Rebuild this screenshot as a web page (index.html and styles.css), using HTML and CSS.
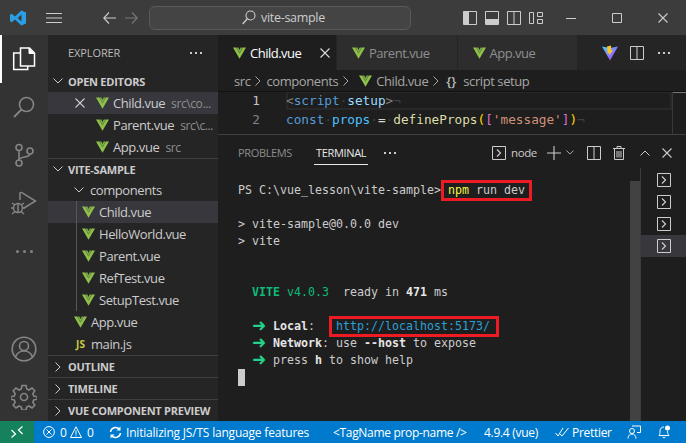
FILE: index.html
```html
<!DOCTYPE html>
<html lang="en">
<head>
<meta charset="utf-8">
<title>vite-sample</title>
<link rel="stylesheet" href="styles.css">
</head>
<body>
<svg class="defs" width="0" height="0">
  <symbol id="vue" viewBox="0 0 13 12">
    <path d="M0 .5h3.200L6.500 6.600 9.800.5H13L6.500 11.800z" fill="#8dc149"/>
    <path d="M3.400.5h2L6.500 3l1.100-2.500h2L6.500 6.200z" fill="#7fa94a"/>
  </symbol>
  <symbol id="termbox" viewBox="0 0 14 14">
    <path d="M.5.5h13v13H.5z" fill="none" stroke="currentColor"/>
    <path d="M5 3.500 8.500 7 5 10.500" fill="none" stroke="currentColor" stroke-width="1.200"/>
  </symbol>
  <symbol id="chev-d" viewBox="0 0 10 6"><path d="M.5.5 5 5 9.500.5" fill="none" stroke="currentColor"/></symbol>
  <symbol id="chev-r" viewBox="0 0 6 10"><path d="M.5.5 5 5 .5 9.500" fill="none" stroke="currentColor"/></symbol>
  <symbol id="split" viewBox="0 0 14 14"><path d="M.5.5h13v13H.5zM7 .5v13" fill="none" stroke="currentColor"/></symbol>
  <symbol id="close" viewBox="0 0 10 10"><path d="M.5.5l9 9M9.500.5l-9 9" fill="none" stroke="currentColor" stroke-width="1.100"/></symbol>
</svg>

<div class="app">
  <header class="titlebar">
    <svg class="logo" width="16" height="16" viewBox="0 0 16 16">
      <path d="M11.400.4 16 2.600v10.800l-4.600 2.200L5 9.600 1.700 12.200 0 11.200V4.800l1.700-1L5 6.400zM11.500 4.600 7.600 8l3.900 3.400z" fill="#2a9fe6"/>
    </svg>
    <svg class="menu" width="16" height="10" viewBox="0 0 16 10"><path d="M0 .5h16M0 5h16M0 9.500h16" stroke="#ccc"/></svg>
    <svg class="nav-back" width="13" height="12" viewBox="0 0 13 12"><path d="M6 .5.800 6 6 11.500M1 6h12" fill="none" stroke="#ccc" stroke-width="1.100"/></svg>
    <svg class="nav-fwd" width="13" height="12" viewBox="0 0 13 12"><path d="M7 .5 12.200 6 7 11.500M12 6H0" fill="none" stroke="#777" stroke-width="1.100"/></svg>
    <div class="command">
      <svg width="14" height="15" viewBox="0 0 14 15"><circle cx="8.500" cy="5.500" r="4.500" fill="none" stroke="#ccc" stroke-width="1.100"/><path d="M5.300 8.800.7 14" stroke="#ccc" stroke-width="1.300"/></svg>
      <span>vite-sample</span>
    </div>
    <div class="layout-icons">
      <svg width="14" height="14" viewBox="0 0 14 14"><path d="M.5.5h13v13H.5z" fill="none" stroke="#ccc"/><path d="M1 1h5v12H1z" fill="#ccc"/></svg>
      <svg width="14" height="14" viewBox="0 0 14 14"><path d="M.5.5h13v13H.5z" fill="none" stroke="#ccc"/><path d="M1 8h12v5H1z" fill="#ccc"/></svg>
      <svg class="ic-split" width="14" height="14" viewBox="0 0 14 14"><use href="#split"/></svg>
      <svg width="14" height="12" viewBox="0 0 14 12"><path d="M.5.5h4v11h-4zM8.500.5h5v4h-5zM8.500 7.500h5v4h-5z" fill="none" stroke="#ccc"/></svg>
    </div>
    <div class="window-controls">
      <svg width="10" height="10" viewBox="0 0 10 10"><path d="M0 5.500h10" stroke="#ccc"/></svg>
      <svg width="10" height="10" viewBox="0 0 10 10"><path d="M.5.5h9v9h-9z" fill="none" stroke="#ccc"/></svg>
      <svg class="tc" width="10" height="10"><use href="#close"/></svg>
    </div>
  </header>

  <div class="workbench">
    <nav class="activity">
      <div class="act-group">
        <div class="act act-active">
          <svg width="24" height="24" viewBox="0 0 24 24"><path d="M8.500 1h9l5 5v13h-14z" fill="none" stroke="#fff" stroke-width="1.500"/><path d="M8 6H1.700v16.500h14V19" fill="none" stroke="#fff" stroke-width="1.500"/><path d="M17 1v5.500h5.500" fill="#fff" stroke="#fff"/></svg>
        </div>
        <div class="act">
          <svg width="24" height="24" viewBox="0 0 24 24"><circle cx="14.500" cy="9.500" r="7" fill="none" stroke="#858585" stroke-width="1.600"/><path d="M9.500 14.500 2 22" stroke="#858585" stroke-width="1.800"/></svg>
        </div>
        <div class="act">
          <svg width="24" height="24" viewBox="0 0 24 24"><g fill="none" stroke="#858585" stroke-width="1.600"><circle cx="7" cy="4.500" r="3"/><circle cx="18" cy="8" r="3"/><circle cx="7" cy="20" r="3"/><path d="M7 7.500V17M18 11c0 4-11 2-11 6"/></g></svg>
        </div>
        <div class="act">
          <svg width="26" height="26" viewBox="0 0 26 26"><g fill="none" stroke="#858585" stroke-width="1.500"><path d="M9 2v8M10 2.200 24.500 11 13 18"/><circle cx="7" cy="18" r="4.500"/><path d="M1 13l3 2M13 13l-3 2M0 18h2.500M12 18h2M1 24l3-2.500M13 24l-3-2.500M7 13.500V22"/></g></svg>
        </div>
        <div class="act act-dots"><i></i><i></i><i></i></div>
      </div>
      <div class="act-group">
        <div class="act">
          <svg width="26" height="26" viewBox="0 0 26 26"><g fill="none" stroke="#858585" stroke-width="1.600"><circle cx="13" cy="13" r="11.800"/><circle cx="13" cy="10" r="4.500"/><path d="M4.500 21c1.500-4 4.500-6 8.500-6s7 2 8.500 6"/></g></svg>
        </div>
        <div class="act">
          <svg width="26" height="26" viewBox="0 0 26 26"><g fill="none" stroke="#858585" stroke-width="1.600"><circle cx="13" cy="13" r="3.500"/><path d="M11 1.500h4l.7 3.500 2.300 1 3-2 2.800 2.800-2 3 1 2.300 3.500.7v2.400l-3.500.7-1 2.300 2 3-2.800 2.800-3-2-2.300 1-.7 3h-4l-.7-3-2.300-1-3 2-2.800-2.800 2-3-1-2.300-3.500-.7v-2.400l3.500-.7 1-2.300-2-3L5 4l3 2 2.300-1z"/></g></svg>
        </div>
      </div>
    </nav>

    <aside class="sidebar">
      <div class="side-title"><span>EXPLORER</span><span class="dots"><i></i><i></i><i></i></span></div>

      <div class="sec-head"><svg class="ch-d" width="10" height="6"><use href="#chev-d"/></svg><b>OPEN EDITORS</b></div>
      <div class="row row-sel oe"><svg class="x" width="10" height="10"><use href="#close"/></svg><svg width="13" height="12"><use href="#vue"/></svg><span class="nm">Child.vue</span><span class="desc">src\co...</span></div>
      <div class="row oe oe-plain"><svg width="13" height="12"><use href="#vue"/></svg><span class="nm">Parent.vue</span><span class="desc">src\c...</span></div>
      <div class="row oe oe-plain"><svg width="13" height="12"><use href="#vue"/></svg><span class="nm">App.vue</span><span class="desc">src</span></div>

      <div class="sec-head sec-line sec-short"><svg class="ch-d" width="10" height="6"><use href="#chev-d"/></svg><b>VITE-SAMPLE</b></div>
      <div class="row folder"><svg class="ch-d" width="10" height="6"><use href="#chev-d"/></svg><span class="nm">components</span></div>
      <div class="nested">
        <div class="row row-sel file"><svg width="13" height="12"><use href="#vue"/></svg><span class="nm">Child.vue</span></div>
        <div class="row file"><svg width="13" height="12"><use href="#vue"/></svg><span class="nm">HelloWorld.vue</span></div>
        <div class="row file"><svg width="13" height="12"><use href="#vue"/></svg><span class="nm">Parent.vue</span></div>
        <div class="row file"><svg width="13" height="12"><use href="#vue"/></svg><span class="nm">RefTest.vue</span></div>
        <div class="row file"><svg width="13" height="12"><use href="#vue"/></svg><span class="nm">SetupTest.vue</span></div>
      </div>
      <div class="row top-file"><svg width="13" height="12"><use href="#vue"/></svg><span class="nm">App.vue</span></div>
      <div class="row top-file"><span class="js">JS</span><span class="nm">main.js</span></div>

      <div class="collapsed">
        <div class="sec-head sec-line"><svg class="ch-r" width="6" height="10"><use href="#chev-r"/></svg><b>OUTLINE</b></div>
        <div class="sec-head sec-line"><svg class="ch-r" width="6" height="10"><use href="#chev-r"/></svg><b>TIMELINE</b></div>
        <div class="sec-head sec-line"><svg class="ch-r" width="6" height="10"><use href="#chev-r"/></svg><b>VUE COMPONENT PREVIEW</b></div>
      </div>
    </aside>

    <main class="main">
      <div class="tabs">
        <div class="tab tab-active"><svg width="13" height="12"><use href="#vue"/></svg><span>Child.vue</span><svg class="tab-x" width="10" height="10"><use href="#close"/></svg></div>
        <div class="tab"><svg width="13" height="12"><use href="#vue"/></svg><span>Parent.vue</span></div>
        <div class="tab"><svg width="13" height="12"><use href="#vue"/></svg><span>App.vue</span></div>
        <div class="tab-actions">
          <svg width="16" height="16" viewBox="0 0 16 16"><defs><linearGradient id="vg" x1="0" y1="0" x2="1" y2="1"><stop offset="0" stop-color="#41d1ff"/><stop offset="1" stop-color="#bd34fe"/></linearGradient></defs><path d="M0 1.500 8 3l8-1.500L8 15.500z" fill="url(#vg)"/><path d="M9 .5 5 1.500l.6 7 1.700-.4-.3 2.400L11 5l-1.800.3z" fill="#ffc51f"/></svg>
          <svg class="ic-split" width="14" height="14" viewBox="0 0 14 14"><use href="#split"/></svg>
          <span class="dots"><i></i><i></i><i></i></span>
        </div>
      </div>
      <div class="crumbs">
        <span>src</span><svg width="6" height="10"><use href="#chev-r"/></svg>
        <span>components</span><svg width="6" height="10"><use href="#chev-r"/></svg>
        <svg class="cr-vue" width="13" height="12"><use href="#vue"/></svg><span>Child.vue</span><svg width="6" height="10"><use href="#chev-r"/></svg>
        <span class="braces">{}</span><span>script setup</span>
      </div>
      <div class="editor">
        <div class="gutter"><div class="ln-on">1</div><div>2</div></div>
        <div class="code">
          <div class="line line-cur"><span class="gr">&lt;</span><span class="kw">script</span><span class="ws">·</span><span class="attr">setup</span><span class="gr">&gt;</span><span class="ws">¬</span></div>
          <div class="line"><span class="kw">const</span><span class="ws">·</span><span class="cst">props</span><span class="ws">·</span>=<span class="ws">·</span><span class="fn">defineProps</span><span class="b1">(</span><span class="b2">[</span><span class="str">'message'</span><span class="b2">]</span><span class="b1">)</span><span class="ws">¬</span></div>
        </div>
        <div class="overview"><i></i></div>
      </div>

      <section class="panel">
        <div class="panel-head">
          <span class="ptab">PROBLEMS</span>
          <span class="ptab ptab-on">TERMINAL</span>
          <span class="dots pdots"><i></i><i></i><i></i></span>
          <div class="panel-actions">
            <svg class="pa-term" width="14" height="14"><use href="#termbox"/></svg>
            <span class="pa-node">node</span>
            <svg class="pa-plus" width="14" height="14" viewBox="0 0 14 14"><path d="M7 0v14M0 7h14" stroke="#ccc" stroke-width="1.100"/></svg>
            <svg class="pa-v" width="8" height="5" viewBox="0 0 10 6"><use href="#chev-d"/></svg>
            <svg class="pa-split" width="14" height="14"><use href="#split"/></svg>
            <svg class="pa-trash" width="12" height="14" viewBox="0 0 12 14"><path d="M0 2.500h12M4 2.500V.5h4v2M1.500 2.500v11h9v-11M4 5v6.500M6 5v6.500M8 5v6.500" fill="none" stroke="#ccc"/></svg>
            <svg class="pa-up" width="10" height="6" viewBox="0 0 10 6"><path d="M.5 5.500 5 1l4.500 4.500" fill="none" stroke="#ccc"/></svg>
            <svg class="pa-x" width="10" height="10"><use href="#close"/></svg>
          </div>
        </div>
        <div class="panel-body">
          <div class="term">
            <div class="tl">PS C:\vue_lesson\vite-sample&gt; <span class="mark mark-cmd"><span class="yl">npm</span> run dev</span></div>
            <div class="tl">&nbsp;</div>
            <div class="tl">&gt; vite-sample@0.0.0 dev</div>
            <div class="tl">&gt; vite</div>
            <div class="tl">&nbsp;</div>
            <div class="tl">&nbsp;</div>
            <div class="tl">  <b class="grn">VITE</b> <span class="grn">v4.0.3</span>  ready in <b class="wht">471</b> ms</div>
            <div class="tl">&nbsp;</div>
            <div class="tl">  <b class="arr">➜</b>  <b class="wht">Local</b>:   <span class="mark mark-url"><span class="url">http://localhost:5173/</span></span></div>
            <div class="tl">  <b class="arr">➜</b>  <b class="wht">Network</b>: use <b class="wht">--host</b> to expose</div>
            <div class="tl">  <b class="arr">➜</b>  press <b class="wht">h</b> to show help</div>
            <div class="tl"><span class="cursor"></span></div>
          </div>
          <div class="term-scroll"></div>
          <div class="term-list">
            <div class="tli"><svg width="14" height="14"><use href="#termbox"/></svg></div>
            <div class="tli"><svg width="14" height="14"><use href="#termbox"/></svg></div>
            <div class="tli"><svg width="14" height="14"><use href="#termbox"/></svg></div>
            <div class="tli tli-on"><svg width="14" height="14"><use href="#termbox"/></svg></div>
          </div>
        </div>
      </section>
    </main>
  </div>

  <footer class="status">
    <div class="remote"><svg width="12" height="12" viewBox="0 0 12 12"><path d="M.5 4 4.500 8 .5 11.500M11.500.5 7.500 4l4 4" fill="none" stroke="#fff" stroke-width="1.200"/></svg></div>
    <svg class="st-err" width="12" height="12" viewBox="0 0 12 12"><circle cx="6" cy="6" r="5.400" fill="none" stroke="#fff"/><path d="M3.500 3.500l5 5M8.500 3.500l-5 5" stroke="#fff"/></svg>
    <span class="st-n">0</span>
    <svg class="st-warn" width="12" height="12" viewBox="0 0 12 12"><path d="M6 .8 11.500 11.500H.5zM6 4.500v4M6 9.300v1" fill="none" stroke="#fff"/></svg>
    <span class="st-n">0</span>
    <svg class="st-sync" width="13" height="13" viewBox="0 0 13 13"><path d="M1.500 6a5 5 0 0 1 9-2.500M11.500 7a5 5 0 0 1-9 2.500" fill="none" stroke="#fff" stroke-width="1.500"/><path d="M11.500.5v4h-4zM1.500 12.500v-4h4z" fill="#fff"/></svg>
    <span class="st-init">Initializing JS/TS language features</span>
    <span class="st-tag">&lt;TagName prop-name /&gt;</span>
    <span class="st-ver">4.9.4 (vue)</span>
    <svg class="st-check" width="14" height="10" viewBox="0 0 14 10"><path d="M.5 6 3 9l5-8M5 7l2 2 6.500-8" fill="none" stroke="#fff"/></svg>
    <span class="st-pret">Prettier</span>
    <svg class="st-fb" width="14" height="14" viewBox="0 0 14 14"><path d="M5 1h8.500v6.500H10" fill="none" stroke="#fff"/><circle cx="5" cy="6" r="2.500" fill="none" stroke="#fff"/><path d="M1 13.500c0-3 2-4.500 4-4.500s4 1.500 4 4.500" fill="none" stroke="#fff"/></svg>
    <svg class="st-bell" width="13" height="14" viewBox="0 0 13 14"><path d="M1 10.500c1-1 1-2.500 1-4.500 0-2.500 1.500-4 4-4 M9.500 6c0 2 .5 3.500 1.500 4.500H1M4.500 12c.5 1 2.500 1 3 0" fill="none" stroke="#fff"/><circle cx="9.500" cy="3" r="2.500" fill="#fff"/></svg>
  </footer>
</div>
</body>
</html>
```
FILE: styles.css
```css
* { box-sizing: border-box; }
html, body { margin: 0; padding: 0; height: 100%; overflow: hidden; background: #1e1e1e; }
body { font-family: "Open Sans", "Noto Sans", sans-serif; font-size: 13px; color: #ccc; }
svg { display: block; flex: none; }
.defs { position: absolute; }
.app { width: 686px; height: 443px; display: flex; flex-direction: column; }
.ic-split { color: #ccc; }

.dots { display: inline-flex; gap: 3px; align-items: center; }
.dots i { width: 2px; height: 2px; background: #ccc; display: block; }

/* title bar */
.titlebar { height: 35px; flex: none; background: #3c3c3c; display: flex; align-items: center; }
.logo { margin-left: 10px; }
.menu { margin-left: 20px; }
.nav-back { margin-left: 41px; }
.nav-fwd { margin-left: 9px; }
.command { margin-left: 11px; width: 262px; height: 24px; border: 1px solid #5a5a5a; border-radius: 6px; background: #444; display: flex; align-items: center; padding-left: 92px; gap: 5px; font-size: 12.500px; letter-spacing: -.3px; }
.layout-icons { margin-left: 52px; display: flex; gap: 8px; align-items: center; }
.window-controls { margin-left: 23px; display: flex; gap: 36px; color: #ccc; }
.tc { width: 10px; height: 10px; }

/* layout */
.workbench { flex: 1; display: flex; min-height: 0; }
.activity { width: 48px; flex: none; background: #333; display: flex; flex-direction: column; justify-content: space-between; }
.act { width: 48px; height: 48px; display: flex; align-items: center; justify-content: center; }
.act-active { border-left: 2px solid #fff; padding-right: 2px; }
.act-dots { gap: 4px; }
.act-dots i { width: 3px; height: 3px; border-radius: 50%; background: #858585; display: block; }

/* sidebar */
.sidebar { width: 170px; flex: none; background: #252526; display: flex; flex-direction: column; color: #ccc; }
.side-title { height: 35px; flex: none; padding: 0 16px 0 20px; display: flex; justify-content: space-between; align-items: center; font-size: 11px; letter-spacing: -.1px; color: #bbb; }
.sec-head { height: 22px; flex: none; display: flex; align-items: center; font-size: 11px; color: #ccc; letter-spacing: -.25px; white-space: nowrap; }
.sec-head b { font-weight: 700; }
.sec-line { border-top: 1px solid #3f3f3f; }
.sec-short { height: 21px; }
.ch-d { margin-left: 5px; margin-right: 5px; color: #ccc; }
.ch-r { margin-left: 7px; margin-right: 7px; color: #ccc; }
.row { height: 22px; flex: none; display: flex; align-items: center; white-space: nowrap; letter-spacing: -.42px; }
.row-sel { background: #37373d; }
.nm { margin-left: 4px; }
.desc { font-size: 12px; color: #8f8f8f; margin-left: 6px; letter-spacing: -.4px; }
.oe { padding-left: 27px; }
.oe .x { margin-right: 11px; color: #ccc; }
.oe-plain { padding-left: 48px; }
.folder { padding-left: 21px; }
.folder .nm { margin-left: 1px; }
.nested { position: relative; }
.nested::before { content: ""; position: absolute; left: 28px; top: 0; bottom: 0; width: 1px; background: #585858; z-index: 1; }
.file { padding-left: 34px; }
.top-file { padding-left: 26px; }
.js { width: 13px; font-size: 10px; font-weight: 700; color: #cbcb41; letter-spacing: 0; text-align: center; }
.collapsed { margin-top: auto; }

/* main */
.main { flex: 1; min-width: 0; display: flex; flex-direction: column; background: #1e1e1e; }
.tabs { height: 35px; flex: none; display: flex; background: #252526; }
.tab { width: 120.500px; display: flex; align-items: center; background: #2d2d2d; color: #8f8f8f; padding-left: 15px; gap: 4px; letter-spacing: -.5px; border-right: 1px solid #252526; white-space: nowrap; }
.tab-active { width: 119px; background: #1e1e1e; color: #fff; }
.tab-x { margin-left: 15px; color: #ddd; }
.tab-actions { flex: 1; display: flex; align-items: center; padding-left: 24px; gap: 12px; }
.tab-actions .dots { margin-left: 2px; }
.crumbs { height: 21px; flex: none; display: flex; align-items: center; padding-left: 16px; gap: 5px; color: #a6a6a6; letter-spacing: -.42px; white-space: nowrap; box-shadow: 0 1px 0 #111; position: relative; }
.crumbs svg { color: #a6a6a6; }
.cr-vue { margin-left: 5px; margin-right: -1px; }
.braces { font-weight: 600; margin-left: 2px; color: #bbb; letter-spacing: 0; width: 12px; }
.editor { height: 44px; flex: none; display: flex; font-family: "DejaVu Sans Mono", monospace; font-size: 12.720px; line-height: 19px; border-bottom: 1px solid #414141; color: #d4d4d4; overflow: hidden; }
.gutter { width: 42px; flex: none; text-align: right; color: #858585; }
.ln-on { color: #c6c6c6; }
.code { flex: 1; min-width: 0; margin-left: 26px; }
.line { height: 19px; white-space: pre; }
.line-cur { box-shadow: inset 0 0 0 2px #282828; }
.overview { width: 14px; flex: none; border-left: 1px solid #3a3a3a; }
.overview i { display: block; height: 2px; background: #777; }
.gr { color: #808080; }
.kw { color: #569cd6; }
.attr { color: #9cdcfe; }
.ws { color: #3f3f3f; }
.cst { color: #4fc1ff; }
.fn { color: #dcdcaa; }
.b1 { color: #ffd700; }
.b2 { color: #da70d6; }
.str { color: #ce9178; }

/* panel */
.panel { flex: 1; min-height: 0; display: flex; flex-direction: column; }
.panel-head { height: 33px; flex: none; display: flex; align-items: center; padding: 0 0 0 18px; font-size: 11px; }
.ptab { color: #8c8c8c; letter-spacing: -.35px; padding: 0 2px; height: 22px; line-height: 20px; margin-top: 5px; white-space: nowrap; }
.ptab-on { margin-left: 20px; color: #e7e7e7; border-bottom: 1px solid #e7e7e7; }
.pdots { margin-left: 16px; margin-top: 2px; }
.panel-actions { margin-left: auto; display: flex; align-items: center; color: #ccc; padding-right: 14px; margin-top: 2px; }
.pa-node { margin-left: 5px; width: 25px; font-size: 11.500px; letter-spacing: -.4px; }
.pa-plus { margin-left: 11px; }
.pa-v { margin-left: 5px; color: #ccc; }
.pa-split { margin-left: 13px; }
.pa-trash { margin-left: 12px; }
.pa-up { margin-left: 15px; }
.pa-x { margin-left: 12px; }
.panel-body { flex: 1; min-height: 0; display: flex; }
.term { flex: 1; min-width: 0; padding: 14px 0 0 20px; font-family: "DejaVu Sans Mono", monospace; font-size: 11.630px; line-height: 17px; color: #ccc; }
.tl { height: 17px; white-space: pre; }
.yl { color: #f5f543; }
.grn { color: #0dbc79; }
.wht { color: #e5e5e5; font-weight: 700; }
.arr { color: #23d18b; display: inline-block; width: 7px; height: 17px; line-height: 15px; font-size: 17px; font-family: "DejaVu Sans", sans-serif; vertical-align: top; }
.url { color: #2aa0d6; }
.mark { display: inline-block; height: 17px; outline: 3px solid #ed1c24; outline-offset: -1px; }
.mark-cmd { padding: 0 5px; margin: 0 -5px; }
.mark-url { padding: 0 7px 0 5px; margin: 0 -7px 0 -5px; }
.cursor { display: block; width: 7px; height: 17px; background: #ccc; }
.term-scroll { width: 10px; flex: none; margin-top: 13px; background: #424242; }
.term-list { width: 46px; flex: none; border-left: 1px solid #3c3c3c; padding-top: 1px; }
.tli { height: 22px; display: flex; align-items: center; padding-left: 15.500px; color: #ccc; }
.tli-on { background: #37373d; }

/* status bar */
.status { height: 22px; flex: none; background: #007acc; color: #fff; display: flex; align-items: center; font-size: 12px; letter-spacing: -.3px; white-space: nowrap; }
.remote { width: 34px; height: 22px; background: #16825d; display: flex; align-items: center; justify-content: center; }
.st-err { margin-left: 9px; }
.st-n { margin-left: 5px; width: 6px; }
.st-warn { margin-left: 4px; }
.st-sync { margin-left: 16px; }
.st-init { margin-left: 4px; width: 183px; letter-spacing: -.2px; }
.st-tag { margin-left: 24px; width: 135px; letter-spacing: -.32px; }
.st-ver { margin-left: 16px; width: 55px; }
.st-check { margin-left: 16px; }
.st-pret { margin-left: 3px; width: 40px; }
.st-fb { margin-left: 15px; }
.st-bell { margin-left: 17px; }
```
